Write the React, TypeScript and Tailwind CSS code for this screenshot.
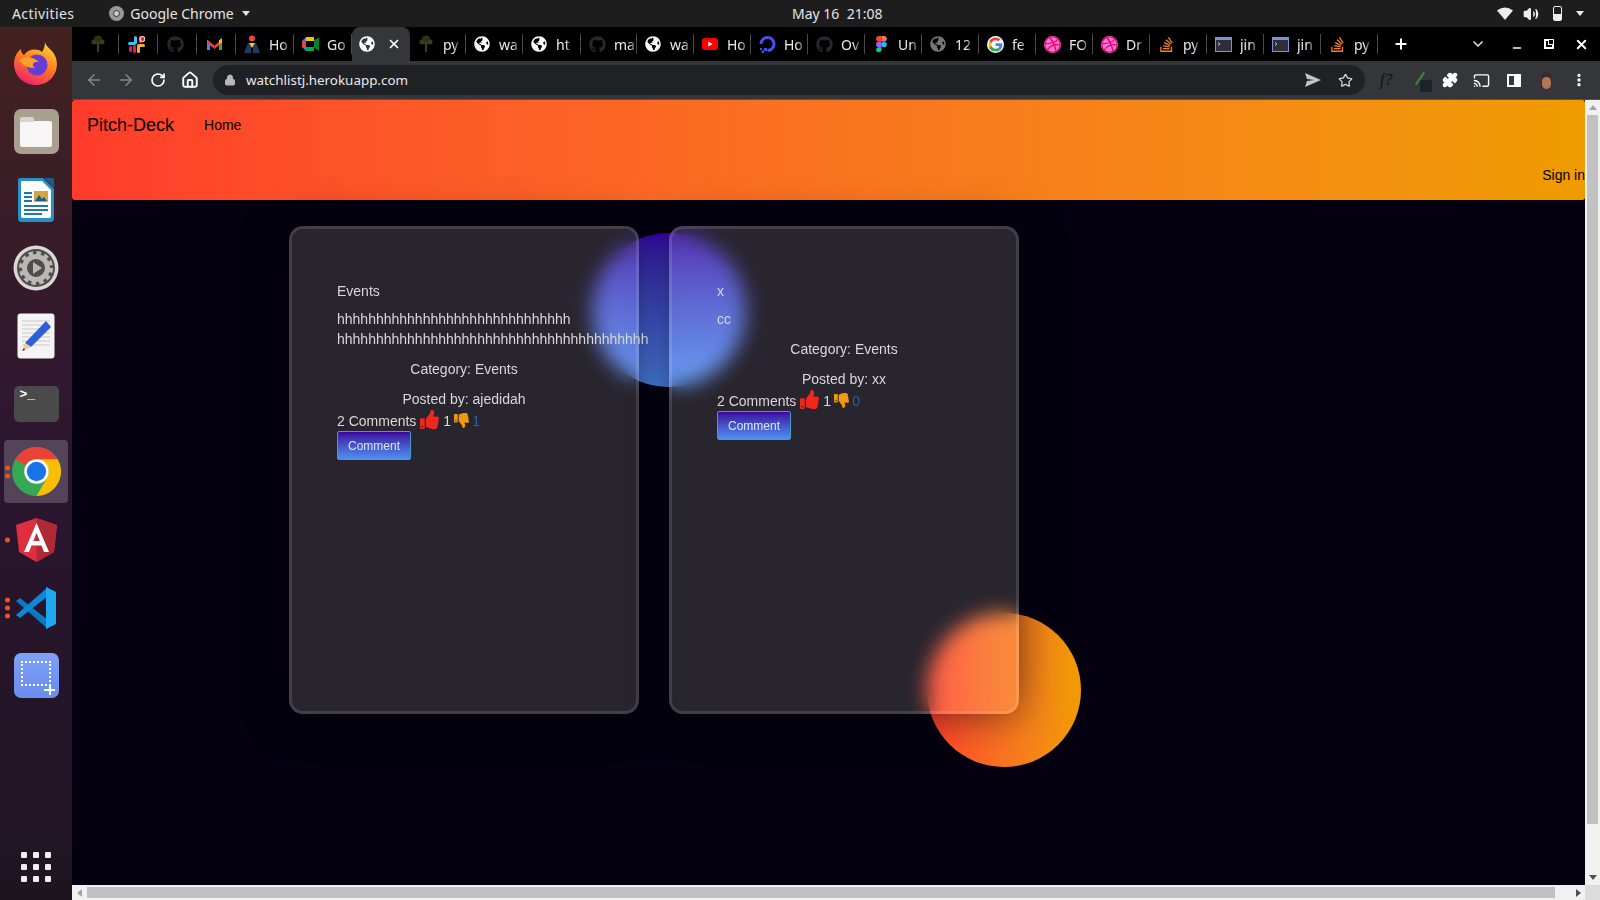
import type { ReactNode } from "react";
import {
  ArrowLeft,
  ArrowRight,
  RotateCw,
  Home,
  Lock,
  Star,
  Plus,
  X,
  ChevronDown,
  Minus,
  Volume2,
  EllipsisVertical,
  Puzzle,
  Cast,
} from "lucide-react";
import { FaGithub, FaGlobeAmericas, FaStackOverflow, FaThumbsUp, FaThumbsDown, FaDribbble } from "react-icons/fa";

const uiFont = "font-['Noto_Sans',sans-serif]";

function TreeIcon() {
  return (
    <svg width="16" height="18" viewBox="0 0 16 18">
      <circle cx="8" cy="5" r="4.500" fill="#2a3318" />
      <circle cx="4" cy="7" r="2.500" fill="#343f1e" />
      <circle cx="12" cy="7" r="2.500" fill="#343f1e" />
      <rect x="7" y="7" width="2" height="10" fill="#4a3a1c" />
    </svg>
  );
}

function SlackIcon() {
  return (
    <svg width="17" height="17" viewBox="0 0 17 17">
      <rect x="0" y="6" width="8" height="3" rx="1.500" fill="#36c5f0" />
      <rect x="6" y="0" width="3" height="8" rx="1.500" fill="#36c5f0" />
      <rect x="9" y="8" width="8" height="3" rx="1.500" fill="#ecb22e" />
      <rect x="9" y="9" width="3" height="8" rx="1.500" fill="#ecb22e" />
      <rect x="1" y="10" width="3" height="6" rx="1.500" fill="#e01e5a" />
      <rect x="5" y="9" width="3" height="8" rx="1.500" fill="#e01e5a" />
      <rect x="11" y="0" width="3" height="7" rx="1.500" fill="#ff3d5a" />
      <circle cx="14.500" cy="3" r="2.500" fill="#f02030" stroke="#fff" strokeWidth="1" />
    </svg>
  );
}

function GmailIcon() {
  return (
    <svg width="15" height="12" viewBox="0 0 15 12">
      <path d="M0 2 L0 12 L3 12 L3 4 Z" fill="#4285f4" />
      <path d="M15 2 L15 12 L12 12 L12 4 Z" fill="#34a853" />
      <path d="M0 1.500 L7.500 7.500 L7.500 11 L0 5 Z" fill="#ea4335" />
      <path d="M15 1.500 L7.500 7.500 L7.500 11 L15 5 Z" fill="#ea4335" />
      <path d="M12 2.200 L15 0 L15 5 L12 6 Z" fill="#fbbc04" />
    </svg>
  );
}

function PersonIcon() {
  return (
    <svg width="18" height="18" viewBox="0 0 18 18">
      <circle cx="9" cy="3.500" r="3" fill="#e8453c" />
      <path d="M1 18 L5 8 L8 8 L8 18 Z" fill="#1d3a5f" />
      <path d="M17 18 L13 8 L10 8 L10 18 Z" fill="#1d3a5f" />
      <path d="M6 8 L12 8 L9 13 Z" fill="#f6c445" />
    </svg>
  );
}

function MeetIcon() {
  return (
    <svg width="17" height="14" viewBox="0 0 17 14">
      <path d="M4 0 H12 V4 H4 V10 H12 V14 H4 L0 10 V4 Z" fill="#2684fc" />
      <rect x="0" y="4" width="4" height="6" fill="#ea4335" />
      <rect x="4" y="0" width="8" height="4" fill="#fbbc04" />
      <rect x="4" y="10" width="8" height="4" fill="#00ac47" />
      <path d="M12 3 V11 L17 13.500 V0.500 Z" fill="#00832d" />
    </svg>
  );
}

function YoutubeIcon() {
  return (
    <svg width="16" height="12" viewBox="0 0 16 12">
      <rect width="16" height="12" rx="3" fill="#ff0000" />
      <path d="M6.300 3.400 L10.600 6 L6.300 8.600 Z" fill="#fff" />
    </svg>
  );
}

function OceanIcon() {
  return (
    <svg width="17" height="17" viewBox="0 0 17 17" fill="none">
      <path d="M8.500 14.500 A6.500 6.500 0 1 0 2 8" stroke="#4a4ff0" strokeWidth="3" />
      <rect x="5" y="12" width="3" height="3" fill="#4a4ff0" />
      <rect x="2.500" y="14.500" width="2.500" height="2.500" fill="#4a4ff0" />
      <rect x="1" y="12" width="2" height="2" fill="#4a4ff0" />
    </svg>
  );
}

function FigmaIcon() {
  return (
    <svg width="11" height="17" viewBox="0 0 11 17">
      <path d="M0 3 A3 3 0 0 1 3 0 H5.500 V5.600 H3 A3 3 0 0 1 0 3Z" fill="#f24e1e" />
      <path d="M5.500 0 H8 A2.800 2.800 0 0 1 8 5.600 H5.500Z" fill="#ff7262" />
      <path d="M0 8.500 A3 3 0 0 1 3 5.600 H5.500 V11.300 H3 A3 3 0 0 1 0 8.500Z" fill="#a259ff" />
      <circle cx="8" cy="8.500" r="2.800" fill="#1abcfe" />
      <path d="M0 14 A3 3 0 0 1 3 11.300 H5.500 V14 A2.800 2.800 0 0 1 0 14Z" fill="#0acf83" />
    </svg>
  );
}

function GoogleIcon() {
  return (
    <svg width="17" height="17" viewBox="0 0 48 48" className="rounded-full bg-white">
      <path fill="#ea4335" d="M24 12c3 0 5.600 1 7.700 3l5.700-5.700C33.900 6 29.400 4 24 4 16.200 4 9.500 8.500 6.200 15l6.700 5.200C14.500 15.400 18.800 12 24 12z" />
      <path fill="#4285f4" d="M43.500 24.500c0-1.400-.1-2.800-.4-4.100H24v7.800h11c-.5 2.600-1.900 4.700-4.100 6.200l6.400 5c3.800-3.500 6.200-8.700 6.200-14.900z" />
      <path fill="#fbbc05" d="M12.900 28.800c-.4-1.200-.7-2.500-.7-3.800s.2-2.600.7-3.800l-6.700-5.200C4.800 18.700 4 21.700 4 25s.8 6.300 2.200 9z" />
      <path fill="#34a853" d="M24 44c5.400 0 9.900-1.800 13.300-4.800l-6.400-5c-1.800 1.200-4.100 1.900-6.900 1.900-5.200 0-9.500-3.500-11.100-8.300L6.200 34C9.500 40.500 16.200 44 24 44z" />
    </svg>
  );
}

function TermTabIcon() {
  return (
    <svg width="17" height="15" viewBox="0 0 17 15">
      <rect x="0.500" y="0.500" width="16" height="14" fill="#2c2f3a" stroke="#7c8fd8" />
      <rect x="1" y="1" width="15" height="2" fill="#7c8fd8" />
      <path d="M3 5.500 L5 7 L3 8.500" stroke="#ddd" fill="none" strokeWidth="0.800" />
    </svg>
  );
}

const globe = <FaGlobeAmericas size={16} color="#fff" />;
const darkHub = <FaGithub size={17} color="#24292e" />;
const stack = <FaStackOverflow size={17} color="#f48024" />;
const dribbble = <FaDribbble size={17} color="#e6007e" className="rounded-full bg-[#f7c]" />;

type Tab = { icon: ReactNode; title?: string; w: number };

const leftTabs: Tab[] = [
  { icon: <TreeIcon />, w: 47 },
  { icon: <SlackIcon />, w: 39 },
  { icon: darkHub, w: 39 },
  { icon: <GmailIcon />, w: 39 },
  { icon: <PersonIcon />, title: "Ho", w: 58 },
  { icon: <MeetIcon />, title: "Go", w: 58 },
];

const rightTabs: Tab[] = [
  { icon: <TreeIcon />, title: "py", w: 56 },
  { icon: globe, title: "wa", w: 57 },
  { icon: globe, title: "ht", w: 58 },
  { icon: darkHub, title: "ma", w: 56 },
  { icon: globe, title: "wa", w: 57 },
  { icon: <YoutubeIcon />, title: "Ho", w: 57 },
  { icon: <OceanIcon />, title: "Ho", w: 57 },
  { icon: darkHub, title: "Ov", w: 57 },
  { icon: <FigmaIcon />, title: "Un", w: 57 },
  { icon: <FaGlobeAmericas size={16} color="#777" />, title: "12", w: 57 },
  { icon: <GoogleIcon />, title: "fe", w: 57 },
  { icon: dribbble, title: "FO", w: 57 },
  { icon: dribbble, title: "Dr", w: 57 },
  { icon: stack, title: "py", w: 57 },
  { icon: <TermTabIcon />, title: "jin", w: 57 },
  { icon: <TermTabIcon />, title: "jin", w: 57 },
  { icon: stack, title: "py", w: 57 },
];

function TabItem({ tab, first }: { tab: Tab; first?: boolean }) {
  return (
    <div
      className={`flex h-full shrink-0 items-center gap-2 border-r border-[#4a4a4a] pr-1 ${
        tab.title ? "pl-[7px]" : first ? "justify-center pl-[10px]" : "justify-center"
      }`}
      style={{ width: tab.w }}
    >
      <span className="flex w-[18px] shrink-0 justify-center">{tab.icon}</span>
      {tab.title && (
        <span className="whitespace-nowrap text-[14px] text-[#e8eaed] [mask-image:linear-gradient(to_right,black_70%,rgba(0,0,0,0.35))]">
          {tab.title}
        </span>
      )}
    </div>
  );
}

function TopBar() {
  return (
    <div className={`relative flex h-[27px] shrink-0 items-center bg-[#1d1d1d] text-[14px] text-[#e4e4e4] ${uiFont}`}>
      <span className="ml-3 tracking-[0.4px]">Activities</span>
      <span className="ml-[35px] flex items-center gap-1.5">
        <span className="flex h-[15px] w-[15px] items-center justify-center rounded-full bg-[#999]">
          <span className="h-[7px] w-[7px] rounded-full border border-[#333] bg-[#ccc]" />
        </span>
        Google Chrome
        <span className="ml-0.5 h-0 w-0 border-x-[4.500px] border-t-[5px] border-x-transparent border-t-[#e4e4e4]" />
      </span>
      <span className="absolute left-[792px] whitespace-pre">May 16  21:08</span>
      <div className="ml-auto mr-4 flex items-center">
        <svg width="16" height="13" viewBox="0 0 16 13">
          <path d="M0 3.500 Q8 -2.500 16 3.500 L8 13Z" fill="#eee" />
        </svg>
        <Volume2 size={16} color="#eee" fill="#eee" className="ml-[10px]" />
        <span className="relative ml-[14px] h-[15px] w-[9px] rounded-[2px] border border-[#eee]">
          <span className="absolute inset-x-0 bottom-0 h-[6px] bg-[#eee]" />
        </span>
        <span className="ml-[14px] h-0 w-0 border-x-[4.500px] border-t-[5px] border-x-transparent border-t-[#eee]" />
      </div>
    </div>
  );
}

function TabStrip() {
  return (
    <div className={`flex h-[34px] shrink-0 items-center bg-black ${uiFont}`}>
      <div className="flex h-[20px] items-center">
        {leftTabs.map((t, i) => (
          <TabItem key={i} tab={t} first={i === 0} />
        ))}
      </div>
      <div className="flex h-full w-[58px] shrink-0 items-center justify-center gap-3 rounded-t-lg bg-[#35363a] pr-[3px]">
        {globe}
        <X size={14} color="#fff" strokeWidth={3} />
      </div>
      <div className="flex h-[20px] items-center">
        {rightTabs.map((t, i) => (
          <TabItem key={i} tab={t} />
        ))}
      </div>
      <Plus size={16} color="#fff" strokeWidth={3} className="ml-[15px]" />
      <ChevronDown size={16} color="#ddd" strokeWidth={2.500} className="ml-[61px]" />
      <Minus size={12} color="#fff" strokeWidth={3} className="ml-[25px] mt-2" />
      <span className="relative ml-[21px] h-[10px] w-[10px] border-2 border-white">
        <span className="absolute -right-[2px] -top-[2px] h-[6px] w-[6px] border border-white bg-black" />
      </span>
      <X size={15} color="#fff" strokeWidth={3} className="ml-[20px]" />
    </div>
  );
}

function Toolbar() {
  return (
    <div className={`flex h-[39px] shrink-0 items-center border-b border-[#555] bg-[#35363a] ${uiFont}`}>
      <ArrowLeft size={18} color="#85878a" className="ml-[13px]" />
      <ArrowRight size={18} color="#85878a" className="ml-[14px]" />
      <RotateCw size={16} color="#fff" strokeWidth={2.500} className="ml-[15px]" />
      <Home size={18} color="#fff" strokeWidth={2.500} className="ml-[15px]" />
      <div className="ml-[14px] flex h-[30px] w-[1152px] items-center rounded-full bg-[#202124] pl-[11px] pr-[12px]">
        <Lock size={12} color="#b5b6b8" fill="#b5b6b8" />
        <span className="ml-[10px] text-[13.400px] text-[#e8eaed]">watchlistj.herokuapp.com</span>
        <svg width="16" height="14" viewBox="0 0 16 14" className="ml-auto">
          <path d="M0 0 L16 7 L0 14 L2 8 L9 7 L2 6 Z" fill="#c4c5c7" />
        </svg>
        <Star size={15} color="#d5d6d8" strokeWidth={2} className="ml-[17px]" />
      </div>
      <span className="ml-[15px] font-['Liberation_Serif',serif] text-[16px] italic text-[#111]">f?</span>
      <span className="relative ml-[19px] h-[18px] w-[18px]">
        <span className="absolute left-[8px] top-0 h-[15px] w-[2px] rotate-[35deg] bg-[#3a8a46]" />
        <span className="absolute bottom-[-3px] right-[-3px] h-[12px] w-[12px] rounded-[2px] bg-[#1b2229]" />
      </span>
      <Puzzle size={16} color="#fff" fill="#fff" className="ml-[13px]" />
      <Cast size={17} color="#fff" className="ml-[15px]" />
      <span className="ml-[17px] flex h-[13px] w-[14px] justify-end border-2 border-white bg-[#35363a]">
        <span className="h-full w-[5px] bg-white" />
      </span>
      <span className="relative ml-[20px] flex h-[17px] w-[11px] items-end justify-center overflow-hidden rounded-full bg-[#3a2a2a]">
        <span className="h-[12px] w-[9px] rounded-full bg-[#b57658]" />
      </span>
      <EllipsisVertical size={16} color="#fff" strokeWidth={3} className="ml-[19px]" />
    </div>
  );
}

function Dock() {
  return (
    <div className="flex w-[72px] shrink-0 flex-col items-center bg-linear-to-b from-[#43211f] via-[#2c1530] to-[#1e1420] pb-[18px] pt-[5px]">
      {/* firefox */}
      <DockSlot>
        <svg width="46" height="46" viewBox="0 0 46 46">
          <defs>
            <linearGradient id="ff" x1="0.800" y1="0" x2="0.300" y2="1">
              <stop offset="0" stopColor="#ffd83a" />
              <stop offset="0.500" stopColor="#ff7a1f" />
              <stop offset="1" stopColor="#ee1d74" />
            </linearGradient>
          </defs>
          <path d="M32 1 C33 7 40 8 43 17 C47 31 37 44 23 44 C10 44 1 34 1 23 C1 16 4 11 8 8 C8 11 9 13 11 14 C15 8 24 7 29 11 C31 8 32 5 32 1Z" fill="url(#ff)" />
          <circle cx="24" cy="24" r="10.500" fill="#6a3bd1" />
          <path d="M6 19 C12 15 20 15 26 21 C20 20 18 24 22 27 C14 27 9 24 6 19Z" fill="#ffa02a" />
        </svg>
      </DockSlot>
      {/* files */}
      <DockSlot>
        <div className="flex h-[45px] w-[45px] items-center justify-center rounded-[7px] bg-[#a89f8e]">
          <div className="relative mt-1 h-[26px] w-[32px] rounded-[2px] bg-[#f7f6f4]">
            <span className="absolute -top-[4px] left-0 h-[5px] w-[14px] rounded-t-[2px] bg-[#d9d5cc]" />
          </div>
        </div>
      </DockSlot>
      {/* writer */}
      <DockSlot>
        <svg width="38" height="46" viewBox="0 0 38 46">
          <path d="M3 1 H26 L37 12 V41 Q37 45 33 45 H5 Q1 45 1 41 V3 Q1 1 3 1Z" fill="#2a8fc4" />
          <path d="M4 4 H25 L34 13 V39 Q34 41 32 41 H6 Q4 41 4 39Z" fill="#fff" />
          <path d="M27 1 L37 1 V11 Z" fill="#1b5d86" />
          <rect x="7" y="15" width="8" height="2" fill="#1d78ad" />
          <rect x="7" y="19" width="8" height="2" fill="#1d78ad" />
          <rect x="7" y="23" width="8" height="2" fill="#1d78ad" />
          <rect x="17" y="14" width="14" height="11" fill="#cfa844" />
          <path d="M18 24 L22 18 L25 22 L27 20 L30 24Z" fill="#1b5d86" />
          <rect x="7" y="28" width="24" height="2" fill="#1d78ad" />
          <rect x="7" y="32" width="24" height="2" fill="#1d78ad" />
          <rect x="7" y="36" width="18" height="2" fill="#1d78ad" />
        </svg>
      </DockSlot>
      {/* settings */}
      <DockSlot>
        <svg width="46" height="46" viewBox="0 0 46 46">
          <circle cx="23" cy="23" r="22.500" fill="#d9d8d6" />
          <circle cx="23" cy="23" r="19" fill="#4f4e4c" />
          <circle cx="23" cy="23" r="11.500" fill="none" stroke="#b9b8b5" strokeWidth="5" />
          <circle cx="23" cy="23" r="15" fill="none" stroke="#b9b8b5" strokeWidth="4" strokeDasharray="4.500 3.350" />
          <path d="M20 17 L29 23 L20 29Z" fill="#b9b8b5" />
        </svg>
      </DockSlot>
      {/* text editor */}
      <DockSlot>
        <svg width="38" height="46" viewBox="0 0 38 46">
          <rect x="0.500" y="0.500" width="37" height="45" rx="3" fill="#f4f4f4" />
          <path d="M5 8 H33 M5 12 H33 M5 16 H33 M5 20 H33 M5 24 H33 M5 28 H33 M5 32 H33" stroke="#c9c9c9" strokeWidth="1" />
          <path d="M29 8 L34 14 L14 34 L8 30Z" fill="#2f5fd8" />
          <path d="M8 30 L14 34 L5 38Z" fill="#f0c9a0" />
          <path d="M5 38 L7 35 L8 37Z" fill="#333" />
        </svg>
      </DockSlot>
      {/* terminal */}
      <DockSlot>
        <div className="h-[36px] w-[45px] rounded-[5px] bg-[#4a4a4a] pl-[6px] font-['Liberation_Mono',monospace] text-[13px] font-bold leading-[18px] text-white">
          &gt;_
        </div>
      </DockSlot>
      {/* chrome */}
      <DockSlot active dots={2}>
        <svg width="49" height="49" viewBox="0 0 48 48">
          <circle cx="24" cy="24" r="24" fill="#34a853" />
          <path d="M24 0 A24 24 0 0 1 44.800 12 L24 12 A12 12 0 0 0 13.600 18 L3.200 12 A24 24 0 0 1 24 0Z" fill="#ea4335" />
          <path d="M44.800 12 A24 24 0 0 1 24 48 L34.400 30 A12 12 0 0 0 34.400 18 L24 12Z" fill="#fbbc04" />
          <circle cx="24" cy="24" r="12" fill="#fff" />
          <circle cx="24" cy="24" r="9.500" fill="#1a73e8" />
        </svg>
      </DockSlot>
      {/* angular */}
      <DockSlot dots={1}>
        <svg width="41" height="44" viewBox="0 0 41 44">
          <path d="M20.500 0 L0 7 L3 34 L20.500 44 L38 34 L41 7Z" fill="#dd2f3d" />
          <path d="M20.500 0 L41 7 L38 34 L20.500 44Z" fill="#b02a35" />
          <path d="M20.500 5 L8 34 H13 L15.500 27.500 H25.500 L28 34 H33Z M17.200 23 L20.500 15 L23.800 23Z" fill="#fff" fillRule="evenodd" />
        </svg>
      </DockSlot>
      {/* vscode */}
      <DockSlot dots={3}>
        <svg width="44" height="44" viewBox="0 0 44 44">
          <path d="M2 15 L6 12 L34 34 V43 Z" fill="#0a78c2" />
          <path d="M2 29 L6 32 L34 10 V1 Z" fill="#0b88d8" />
          <path d="M32 1 L42 6 V38 L32 43Z" fill="#1fa8f2" />
        </svg>
      </DockSlot>
      {/* screenshot */}
      <DockSlot>
        <div className="relative h-[45px] w-[45px] rounded-[7px] bg-linear-to-b from-[#7ea0f5] to-[#6a8cec]">
          <span className="absolute left-[7px] top-[8px] h-[25px] w-[30px] border-2 border-dotted border-white" />
          <span className="absolute bottom-[7px] right-[4px] h-[2px] w-[11px] bg-white" />
          <span className="absolute bottom-[3px] right-[8px] h-[11px] w-[2px] bg-white" />
        </div>
      </DockSlot>
      <div className="mt-auto grid grid-cols-3 gap-[6px]">
        {Array.from({ length: 9 }).map((_, i) => (
          <span key={i} className="h-[6px] w-[6px] rounded-[1px] bg-[#eeeeec]" />
        ))}
      </div>
    </div>
  );
}

function DockSlot({ children, active, dots = 0 }: { children: ReactNode; active?: boolean; dots?: number }) {
  return (
    <div
      className={`relative mb-[5px] flex h-[63px] w-[64px] shrink-0 items-center justify-center rounded-[4px] ${
        active ? "bg-[#54445a]" : ""
      }`}
    >
      {children}
      {dots > 0 && (
        <div className="absolute left-[1px] top-1/2 flex -translate-y-1/2 flex-col gap-[3px]">
          {Array.from({ length: dots }).map((_, i) => (
            <span key={i} className="h-[5px] w-[5px] rounded-full bg-[#e95420]" />
          ))}
        </div>
      )}
    </div>
  );
}

function Card({
  title,
  body,
  author,
  dislikes,
}: {
  title: string;
  body: string[];
  author: string;
  dislikes: number;
}) {
  return (
    <div className="h-[488px] w-[350px] shrink-0 rounded-[14px] border-[3px] border-white/[0.12] bg-[rgba(255,255,235,0.145)] px-[45px] pt-[52px] text-[14px] leading-[20px] text-[#d8d8d8] shadow-[0_0_40px_rgba(8,7,16,0.6)] backdrop-blur-[10px]">
      <p className="mb-2">{title}</p>
      <p className="mb-[10px] whitespace-nowrap">
        {body.map((line, i) => (
          <span key={i} className="block">
            {line}
          </span>
        ))}
      </p>
      <p className="mb-[10px] text-center">Category: Events</p>
      <p className="mb-px text-center">Posted by: {author}</p>
      <div className="flex h-[21px] items-center">
        <span>2 Comments</span>
        <FaThumbsUp size={19} color="#f3261c" className="mb-[3px] ml-[4px]" />
        <span className="ml-[4px]">1</span>
        <FaThumbsDown size={15} color="#ef9a0c" className="ml-[3px]" />
        <span className="ml-[3px] text-[#2f5ea8]">{dislikes}</span>
      </div>
      <button
        type="button"
        className="block h-[29px] w-[74px] rounded-[2px] border border-[#3fa0c4] bg-linear-to-b from-[#3a00a0] to-[#4f8ff0] text-center text-[12px] text-[#dbe4ff]"
      >
        Comment
      </button>
    </div>
  );
}

export default function App() {
  return (
    <div className="flex h-[900px] w-[1600px] flex-col overflow-hidden bg-black font-['Liberation_Sans',sans-serif]">
      <TopBar />
      <div className="flex min-h-0 flex-1">
        <Dock />
        <div className="flex min-w-0 flex-1 flex-col">
          <TabStrip />
          <Toolbar />
          <div className="flex min-h-0 flex-1">
            <main className="relative min-w-0 flex-1 overflow-hidden bg-[#04000f]">
              <nav className="relative h-[100px] rounded-[3px] bg-linear-to-r from-[#ff3b2b] to-[#f09c00] text-black">
                <div className="flex items-center pl-[15px] pt-[13px]">
                  <span className="text-[18px] leading-[24px]">Pitch-Deck</span>
                  <span className="ml-[30px] text-[14px]">Home</span>
                </div>
                <div className="mt-[28px] text-right text-[14px] leading-[20px]">Sign in</div>
              </nav>

              {/* glass shapes, sit behind the blurred cards */}
              <div className="absolute left-[520px] top-[133px] h-[154px] w-[154px] rounded-full bg-linear-to-b from-[#3a00b0] to-[#4f8ef5]" />
              <div className="absolute left-[855px] top-[513px] h-[154px] w-[154px] rounded-full bg-linear-to-r from-[#ff3b2b] to-[#f09c00]" />

              <div className="relative mt-[26px] flex gap-[30px] pl-[217px]">
                <Card
                  title="Events"
                  body={["h".repeat(30), "h".repeat(40)]}
                  author="ajedidah"
                  dislikes={1}
                />
                <Card title="x" body={["cc"]} author="xx" dislikes={0} />
              </div>
            </main>

            {/* vertical scrollbar */}
            <div className="flex w-[15px] shrink-0 flex-col items-center bg-[#f1f1f1]">
              <span className="mt-[5px] h-0 w-0 border-x-[4px] border-b-[5px] border-x-transparent border-b-[#a3a3a3]" />
              <span className="mt-[5px] h-[709px] w-[11px] bg-[#c1c1c1]" />
              <span className="mb-[5px] mt-auto h-0 w-0 border-x-[4px] border-t-[5px] border-x-transparent border-t-[#505050]" />
            </div>
          </div>

          {/* horizontal scrollbar */}
          <div className="flex h-[15px] shrink-0 items-center bg-[#f1f1f1]">
            <span className="ml-[5px] h-0 w-0 border-y-[4px] border-r-[5px] border-y-transparent border-r-[#a3a3a3]" />
            <span className="ml-[5px] h-[11px] w-[1468px] bg-[#c1c1c1]" />
            <span className="ml-[21px] h-0 w-0 border-y-[4px] border-l-[5px] border-y-transparent border-l-[#505050]" />
            <span className="ml-auto h-full w-[15px] bg-[#dcdcdc]" />
          </div>
        </div>
      </div>
    </div>
  );
}
